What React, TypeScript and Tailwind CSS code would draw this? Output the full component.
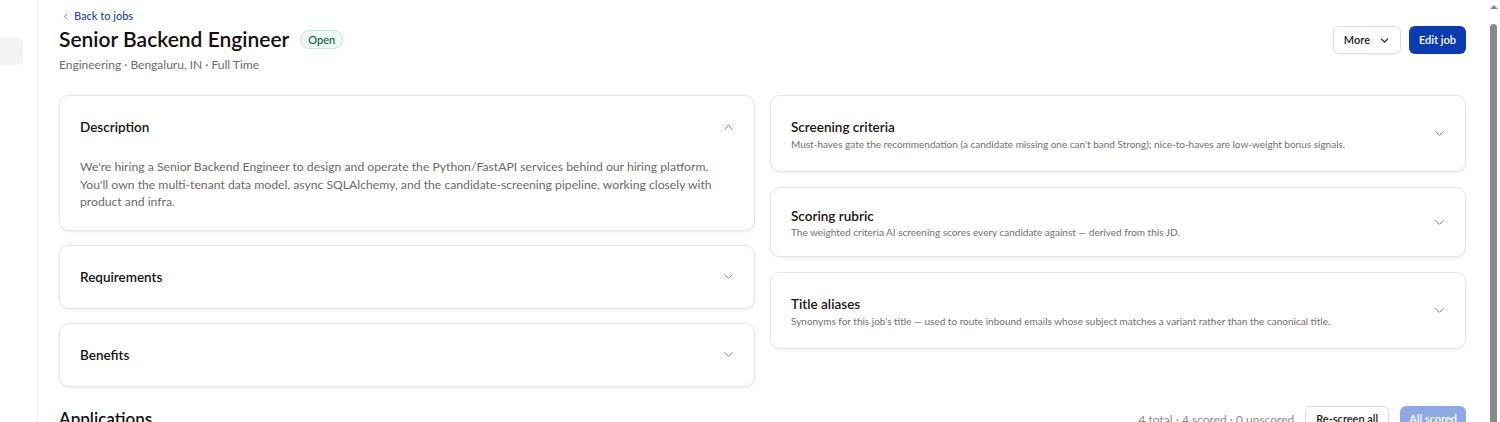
import React from "react";
import { ChevronDown, ChevronUp, ChevronLeft } from "lucide-react";

const font = { fontFamily: '"Segoe UI", Lato, "Noto Sans", sans-serif' };

function Card({ title, children, open }: { title: string; children?: React.ReactNode; open?: boolean }) {
  return (
    <div className="rounded-[10px] border border-[#e6e6e6] bg-white shadow-[0_1px_3px_rgba(0,0,0,0.08)]">
      <div className="flex items-center justify-between px-5 pt-[19px] pb-[19px]">
        <h3 className="text-[13.5px] font-semibold leading-6 text-[#151515]">{title}</h3>
        {open ? (
          <ChevronUp size={15} strokeWidth={1.4} className="mr-[-2px] text-[#6e6e6e]" />
        ) : (
          <ChevronDown size={15} strokeWidth={1.4} className="mr-[-2px] text-[#6e6e6e]" />
        )}
      </div>
      {children}
    </div>
  );
}

function SideCard({ title, sub, tight }: { title: string; sub: string; tight?: boolean }) {
  return (
    <div className="rounded-[10px] border border-[#e6e6e6] bg-white shadow-[0_1px_3px_rgba(0,0,0,0.08)]">
      <div className={`flex items-center justify-between px-5 ${tight ? "pt-[19px] pb-[18px]" : "pt-[19px] pb-[20px]"}`}>
        <div>
          <h3 className={`text-[13.5px] font-semibold text-[#151515] ${tight ? "leading-[18px]" : "leading-6"}`}>{title}</h3>
          <p className={`text-[10px] text-[#6f6f6f] ${tight ? "leading-[12px] mt-[1px]" : "leading-[14px] mt-[-2px]"}`}>{sub}</p>
        </div>
        <ChevronDown size={15} strokeWidth={1.4} className="mr-[-2px] text-[#6e6e6e]" />
      </div>
    </div>
  );
}

export default function App() {
  return (
    <div className="flex h-[422px] w-[1500px] overflow-hidden bg-white" style={font}>
      <aside className="w-[38px] shrink-0 border-r border-[#efefef]">
        <div className="mt-[38px] h-[27px] w-[23px] rounded-r-[5px] bg-[#f4f4f4]" />
      </aside>
      <main className="flex-1 px-[21px] pt-[9px]">
        <a className="flex items-center gap-[4px] text-[11px] leading-[14px] text-[#2147a8]">
          <ChevronLeft size={9} strokeWidth={2} className="ml-[2px]" />
          <span className="font-medium">Back to jobs</span>
        </a>
        <div className="mt-[1px] flex items-start justify-between">
          <div>
            <div className="flex items-center gap-[11px]">
              <h1 className="text-[21px] font-semibold leading-[30px] text-[#111]">Senior Backend Engineer</h1>
              <span className="rounded-full border border-[#bfe9d6] bg-[#eefaf4] px-[7px] text-[11px] font-medium leading-[17px] text-[#0f5a3c]">
                Open
              </span>
            </div>
            <p className="mt-[3px] text-[12px] leading-[16px] text-[#6b6b6b]">Engineering · Bengaluru, IN · Full Time</p>
          </div>
          <div className="mt-[2px] flex items-center gap-[8px]">
            <button className="flex h-[28px] items-center gap-[8px] rounded-[6px] border border-[#dedede] bg-white pl-[10px] pr-[9px] text-[11px] font-semibold text-[#1a1a1a] shadow-[0_1px_2px_rgba(0,0,0,0.06)]">
              More
              <ChevronDown size={13} strokeWidth={2} />
            </button>
            <button className="h-[28px] rounded-[6px] bg-[#0b3bb0] px-[10px] text-[11px] font-semibold text-white">Edit job</button>
          </div>
        </div>

        <div className="mt-[22px] grid grid-cols-2 items-start gap-x-[15px]">
          <div className="flex flex-col gap-[14px]">
            <Card title="Description" open>
              <p className="px-5 pb-[19px] text-[12.2px] leading-[17.5px] text-[#6a6a6a]">
                We're hiring a Senior Backend Engineer to design and operate the Python/FastAPI services behind our hiring platform.
                You'll own the multi-tenant data model, async SQLAlchemy, and the candidate-screening pipeline, working closely with
                product and infra.
              </p>
            </Card>
            <Card title="Requirements" />
            <Card title="Benefits" />
          </div>
          <div className="flex flex-col gap-[15px]">
            <SideCard
              title="Screening criteria"
              sub="Must-haves gate the recommendation (a candidate missing one can't band Strong); nice-to-haves are low-weight bonus signals."
            />
            <SideCard
              tight
              title="Scoring rubric"
              sub="The weighted criteria AI screening scores every candidate against — derived from this JD."
            />
            <SideCard
              title="Title aliases"
              sub="Synonyms for this job's title — used to route inbound emails whose subject matches a variant rather than the canonical title."
            />
          </div>
        </div>

        <div className="mt-[18px] flex items-center justify-between">
          <h2 className="text-[17px] font-semibold leading-[26px] text-[#111]">Applications</h2>
          <div className="mt-[1px] flex items-center gap-[11px]">
            <span className="text-[12px] text-[#8a8a8a]">4 total · 4 scored · 0 unscored</span>
            <button className="h-[28px] rounded-[6px] border border-[#dedede] bg-white px-[10px] text-[11px] font-semibold text-[#1a1a1a]">
              Re-screen all
            </button>
            <button className="h-[28px] rounded-[6px] bg-[#8ea8e4] px-[9px] text-[11px] font-semibold text-white">All scored</button>
          </div>
        </div>
      </main>
      <div className="relative w-[13px] shrink-0 bg-white">
        <div className="mx-auto mt-[5px] h-0 w-0 border-x-[4px] border-b-[4px] border-x-transparent border-b-[#8a8a8a]" />
        <div className="mx-auto mt-[15px] h-[420px] w-[7px] rounded-full bg-[#8a8a8a]" />
      </div>
    </div>
  );
}
